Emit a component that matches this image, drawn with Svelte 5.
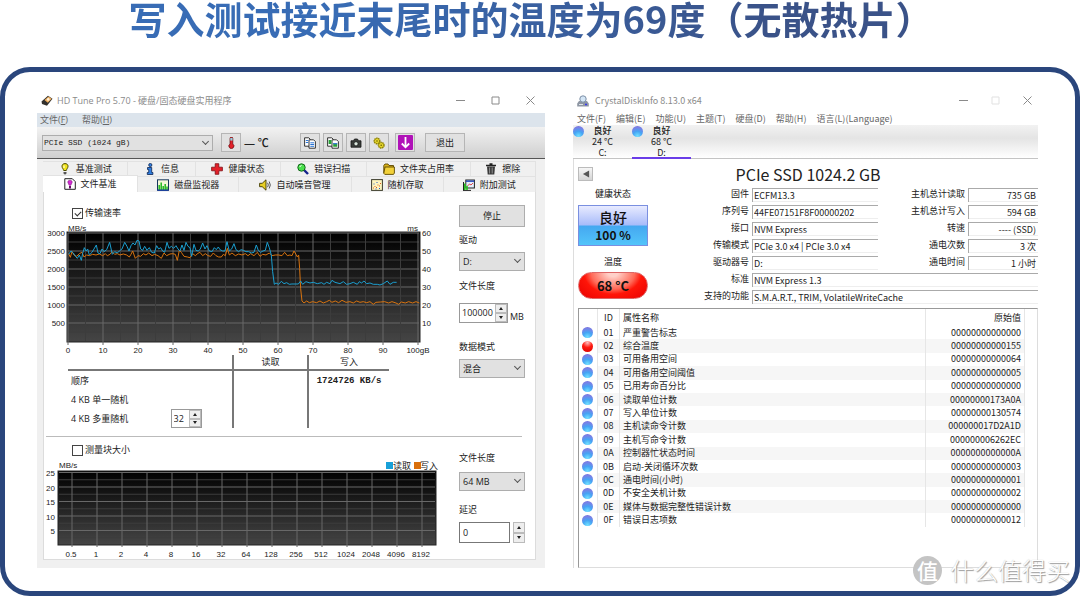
<script>
  const topTabs = [
    { icon: 'bulb', label: '基准测试', grow: 85 },
    { icon: 'info', label: '信息', grow: 67 },
    { icon: 'cross', label: '健康状态', grow: 85 },
    { icon: 'search', label: '错误扫描', grow: 86 },
    { icon: 'folder', label: '文件夹占用率', grow: 103 },
    { icon: 'trash', label: '擦除', grow: 65 }
  ];
  const bottomTabs = [
    { icon: 'filebench', label: '文件基准', grow: 95, selected: true },
    { icon: 'monitor', label: '磁盘监视器', grow: 101 },
    { icon: 'speaker', label: '自动噪音管理', grow: 112 },
    { icon: 'random', label: '随机存取', grow: 92 },
    { icon: 'extra', label: '附加测试', grow: 92 }
  ];

  const tens = [0, 10, 20, 30, 40, 50, 60, 70, 80, 90, 100];
  const blocks = ['0.5', 1, 2, 4, 8, 16, 32, 64, 128, 256, 512, 1024, 2048, 4096, 8192];

  // traces are stored at 3x the chart scale
  const readTrace =
    '98,88 105,78 112,84 118,94 124,100 130,90 136,106 140,85 145,68 150,78 155,72 160,90 168,82 174,72 181,60 186,84 192,86 198,72 204,80 212,74 221,52 229,88 236,80 244,84 250,78 258,72 266,52 273,64 279,78 285,62 291,54 297,60 303,46 309,48 314,72 320,76 326,64 333,76 340,68 347,82 355,84 362,62 368,72 374,68 380,78 386,82 393,52 399,70 406,64 413,70 420,62 426,72 432,78 438,60 444,76 450,52 456,64 462,68 467,94 474,58 480,76 487,78 493,72 500,54 507,72 513,62 520,78 528,80 535,68 541,74 547,66 552,74 560,78 567,78 573,50 580,78 587,72 594,56 600,74 608,80 615,74 622,76 630,80 638,80 646,84 654,82 661,60 667,76 674,82 681,78 688,76 694,52 700,68 706,90 710,140 715,178 720,174 728,178 736,169 744,176 752,173 760,178 768,177 787,177 794,168 800,178 810,170 822,174 832,172 844,176 857,173 864,178 872,172 882,176 888,166 897,172 912,176 922,170 932,178 942,176 952,172 964,178 970,170 977,174 984,168 992,176 1002,174 1012,178 1024,178 1032,180 1042,176 1054,168 1062,178 1072,172 1082,172';
  const writeTrace =
    '98,86 103,97 108,80 114,90 122,94 130,86 138,82 144,96 152,90 160,92 170,88 180,90 190,87 200,92 208,86 214,92 222,88 228,80 236,88 244,86 252,90 262,87 272,90 280,96 285,88 290,78 298,100 306,92 314,94 322,86 330,90 338,84 348,92 356,88 366,92 376,100 384,84 392,92 402,87 410,86 418,88 424,106 430,76 436,82 444,94 454,96 462,98 470,86 478,92 486,85 492,82 500,92 508,86 516,92 524,94 532,84 540,92 548,96 556,96 562,88 568,92 574,70 580,90 588,84 598,92 608,87 618,90 628,86 636,92 644,86 654,92 664,82 672,94 680,88 690,90 700,84 708,92 718,90 728,90 738,92 746,82 754,92 762,90 768,92 774,78 780,88 784,96 788,90 791,130 794,190 798,228 804,234 812,228 820,233 830,230 842,233 852,228 862,234 872,230 880,226 888,232 898,228 908,233 918,226 930,232 942,230 952,234 962,228 972,232 982,230 992,233 1002,230 1012,238 1020,232 1034,231 1046,230 1058,234 1068,230 1080,234 1088,238 1096,231 1108,234 1118,230 1130,234 1140,230 1150,234';

  const menus = ['文件(F)', '编辑(E)', '功能(U)', '主题(T)', '硬盘(D)', '帮助(H)', '语言(L)(Language)'];
  const disks = [
    { temp: '24 °C', letter: 'C:' },
    { temp: '68 °C', letter: 'D:', selected: true }
  ];

  const specs = [
    { id: 'fw', label: '固件', value: 'ECFM13.3', rid: 'reads', rlabel: '主机总计读取', rvalue: '735 GB' },
    { id: 'sn', label: '序列号', value: '44FE07151F8F00000202', rid: 'writes', rlabel: '主机总计写入', rvalue: '594 GB' },
    { id: 'if', label: '接口', value: 'NVM Express', rid: 'rpm', rlabel: '转速', rvalue: '---- (SSD)' },
    { id: 'mode', label: '传输模式', value: 'PCIe 3.0 x4 | PCIe 3.0 x4', rid: 'count', rlabel: '通电次数', rvalue: '3 次' },
    { id: 'drv', label: '驱动器号', value: 'D:', rid: 'hours', rlabel: '通电时间', rvalue: '1 小时' },
    { id: 'std', label: '标准', value: 'NVM Express 1.3' },
    { id: 'feat', label: '支持的功能', value: 'S.M.A.R.T., TRIM, VolatileWriteCache' }
  ];

  const attributes = [
    ['01', '严重警告标志', '00000000000000'],
    ['02', '综合温度', '00000000000155'],
    ['03', '可用备用空间', '00000000000064'],
    ['04', '可用备用空间阈值', '00000000000005'],
    ['05', '已用寿命百分比', '00000000000000'],
    ['06', '读取单位计数', '00000000173A0A'],
    ['07', '写入单位计数', '00000000130574'],
    ['08', '主机读命令计数', '000000017D2A1D'],
    ['09', '主机写命令计数', '000000006262EC'],
    ['0A', '控制器忙状态时间', '0000000000000A'],
    ['0B', '启动-关闭循环次数', '00000000000003'],
    ['0C', '通电时间(小时)', '00000000000001'],
    ['0D', '不安全关机计数', '00000000000002'],
    ['0E', '媒体与数据完整性错误计数', '00000000000000'],
    ['0F', '错误日志项数', '00000000000012']
  ];

  let transfer = $state(true);
  let blockSize = $state(false);
  let queue = $state(32);
  let fileLength = $state(100000);
  let delay = $state(0);
</script>

{#snippet icon(name)}
  <svg class="icon" viewBox="0 0 12 12" aria-hidden="true">
    {#if name === 'bulb'}
      <path d="M6 .6c2 0 3 1.200 3 2.700 0 1.700-1.400 2.600-1.700 4.200H4.700C4.400 5.900 3 5 3 3.300 3 1.800 4 .6 6 .6z" fill="#f2e51c" stroke="#4c4a00" />
      <path d="M5 2.500v2.500" stroke="#fff" />
      <path d="M4.500 9h3v1.500L6 11.700l-1.500-1.200z" fill="#555" />
    {:else if name === 'info'}
      <circle cx="6.300" cy="2" r="1.600" fill="#2f7ee0" stroke="#0b2350" stroke-width=".8" />
      <path d="M3.500 4.500h4.200v5h1.200v2H3.300v-2h1.400v-3H3.500z" fill="#2f7ee0" stroke="#0b2350" stroke-width=".8" />
    {:else if name === 'cross'}
      <path d="M4.200.7h3.600v3.500h3.600v3.600H7.800v3.500H4.200V7.800H.6V4.200h3.600z" fill="#e3202a" stroke="#7c0d12" stroke-width=".8" />
    {:else if name === 'search'}
      <path d="M7 7l4 4" stroke="#14228c" stroke-width="2.400" />
      <circle cx="4.500" cy="4.500" r="3.700" fill="#49e04c" stroke="#12671a" />
      <path d="M2.800 4a2 2 0 0 1 1.700-1.500" stroke="#fff" fill="none" />
    {:else if name === 'folder'}
      <path d="M.8 10V2.500L2 1h3l1 1.500h4.500V4" fill="#d9b21a" stroke="#5c4700" stroke-width=".9" />
      <path d="M2 4h9.400v6L10.500 11.400H1.800L.8 10.300z" fill="#f2d13a" stroke="#5c4700" stroke-width=".9" />
    {:else if name === 'trash'}
      <path d="M1 2.500h10M4.500 1h3" stroke="#222" stroke-width="1.500" />
      <path d="M2 3.500h8L9.300 11.500H2.700z" fill="#3a3a3a" />
      <path d="M4.600 4.500v6M7.200 4.500v6" stroke="#aaa" stroke-width=".8" />
    {:else if name === 'filebench'}
      <path d="M.8.700h7.500l3 3v7.600H.8z" fill="#fff" stroke="#222" />
      <path d="M6 2.200c1.500 0 2.200.9 2.200 2S7 6 6.900 7.300H5.100C5 6 3.800 5.300 3.800 4.200s.7-2 2.200-2z" fill="#d429d4" stroke="#6b0b6b" stroke-width=".5" />
      <path d="M6 8v2.500" stroke="#6b0b6b" stroke-width="2" />
    {:else if name === 'monitor'}
      <rect x=".5" y=".8" width="11" height="10.500" fill="#f4f8d8" stroke="#16365e" />
      <path d="M2.200 11V6M4.200 11V3.500M6.200 11V7M8.200 11V5M10 11V7.500" stroke="#22b81f" stroke-width="1.500" />
      <path d="M.5 11.200h11" stroke="#1a3fa0" stroke-width="1.400" />
    {:else if name === 'speaker'}
      <path d="M.6 4.300h2.600L7 .8v10.400L3.200 7.700H.6z" fill="#e8cf24" stroke="#403900" stroke-width=".9" />
      <path d="M8.600 3.800q1.400 2.200 0 4.400M10.200 2.500q2.200 3.500 0 7" fill="none" stroke="#444" stroke-width=".9" />
    {:else if name === 'random'}
      <rect x=".6" y=".6" width="10.800" height="10.800" fill="#fdf6c0" stroke="#3c3c2c" />
      <path d="M2 9h1M3.500 7.500h1M5 8.500h1M6.500 6h1M8 7h1M9 4.500h1" stroke="#e06020" />
      <path d="M2.500 5h1M5.500 3.500h1M8 9.500h1M4.500 10h1" stroke="#2a57c4" />
    {:else if name === 'extra'}
      <rect x="2.800" y="1" width="8.600" height="8" fill="#e4eefc" stroke="#222" />
      <path d="M3 2.200h8.200" stroke="#2748c0" stroke-width="1.400" />
      <path d="M4.500 7l2-2 1.500 1 2-2" fill="none" stroke="#d33" stroke-width=".9" />
      <path d="M.5 11.400V3M0 11.400h8" stroke="#222" />
      <path d="M1.800 11V4.500M4 11V7" stroke="#26c422" stroke-width="1.600" />
    {:else if name === 'thermo'}
      <path d="M5 1.500a1.400 1.400 0 0 1 2.800 0V7A2.500 2.500 0 1 1 5 7z" fill="#e3202a" stroke="#5b0d10" stroke-width=".7" />
      <path d="M5.300 1h2.200v2.600H5.300z" fill="#8fd4e6" />
    {:else if name === 'copy' || name === 'copyimg'}
      <path d="M.6.800h4.200L6.500 2.500v6.700H.6z" fill="#fff" stroke="#222" stroke-width=".9" />
      <path d="M5 2.800h4.600l1.800 1.800v6.600H5z" fill="#fff" stroke="#222" stroke-width=".9" />
      {#if name === 'copy'}
        <path d="M1.800 3.500h2.500M1.800 5.500h2.500M6.300 5.800h3.800M6.300 7.500h3.800M6.300 9.300h3.800" stroke="#2a74d4" />
      {:else}
        <path d="M1.600 3h2.800v4H1.600zM6.200 6h4v3.800h-4z" fill="#27a435" />
        <path d="M6.200 6h4v1.300h-4z" fill="#3a7bd5" />
      {/if}
    {:else if name === 'camera'}
      <path d="M1 3.800h2.500L4.500 2h3l1 1.800H11v6.400H1z" fill="#3b3f3b" stroke="#151515" stroke-width=".8" />
      <circle cx="6" cy="6.800" r="2.100" fill="#d9e6dc" stroke="#111" stroke-width=".7" />
    {:else if name === 'gears'}
      <circle cx="4" cy="4" r="2.800" fill="#e4d52b" stroke="#8d8000" stroke-dasharray="1.500 .5" stroke-width="1.400" />
      <circle cx="8.200" cy="8.200" r="2.800" fill="#e4d52b" stroke="#8d8000" stroke-dasharray="1.500 .5" stroke-width="1.400" />
      <circle cx="4" cy="4" r=".8" fill="#6d6300" />
      <circle cx="8.200" cy="8.200" r=".8" fill="#6d6300" />
    {/if}
  </svg>
{/snippet}

{#snippet spin(label, step)}
  <span class="spin">
    <button class="up" aria-label="{label} +" onclick={() => step(1)}></button>
    <button class="down" aria-label="{label} −" onclick={() => step(-1)}></button>
  </span>
{/snippet}

{#snippet controls(disabled)}
  <span class="controls" class:narrow={disabled}>
    <button aria-label="最小化"><svg viewBox="0 0 9 9"><path d="M0 4.500h9" /></svg></button>
    <button aria-label="最大化" {disabled}><svg viewBox="0 0 9 9"><path d="M1 1h7v7H1z" /></svg></button>
    <button aria-label="关闭"><svg viewBox="0 0 9 9"><path d="M.5.500l8 8M8.500.500l-8 8" /></svg></button>
  </span>
{/snippet}

<main>
  <h1><span>写入测试接近末尾时的温度为69度（无散热片）</span></h1>

  <div class="frame">
    <section class="window tune">
      <header class="titlebar">
        <svg class="icon" viewBox="0 0 12 12" aria-hidden="true">
          <path d="M.5 6.500L7 .8l4.500 3L6 10.800 1 9z" fill="#33302c" />
          <path d="M3.500 5L7.500 1.500l3.200 2.300-3.900 4z" fill="#f0b060" />
          <circle cx="7.200" cy="4.400" r="1.300" fill="#fff0d8" />
        </svg>
        <span>HD Tune Pro 5.70 - 硬盘/固态硬盘实用程序</span>
        {@render controls(false)}
      </header>
      <nav class="menu">
        <button>文件(<u>F</u>)</button>
        <button>帮助(<u>H</u>)</button>
      </nav>

      <div class="toolbar">
        <span class="combo drive">
          <select aria-label="硬盘"><option>PCIe SSD (1024 gB)</option></select>
        </span>
        <button class="tool" aria-label="温度">{@render icon('thermo')}</button>
        <span class="degrees">— ℃</span>
        <div class="tools">
          <button class="tool" aria-label="复制文本">{@render icon('copy')}</button>
          <button class="tool" aria-label="复制图像">{@render icon('copyimg')}</button>
          <button class="tool" aria-label="截图">{@render icon('camera')}</button>
          <button class="tool" aria-label="选项">{@render icon('gears')}</button>
        </div>
        <button class="tool" aria-label="保存">
          <svg class="save" viewBox="0 0 15 15" aria-hidden="true">
            <rect width="15" height="15" rx="1" fill="#b012b8" />
            <path d="M7.500 2v10M3.800 8.500l3.700 3.800 3.700-3.800" fill="none" stroke="#fff" stroke-width="1.800" />
          </svg>
        </button>
        <button class="tool exit">退出</button>
      </div>

      <div class="tabs" role="tablist">
        <div class="tab-row">
          {#each topTabs as tab}
            <button role="tab" aria-selected="false" style:flex-grow={tab.grow}>
              {@render icon(tab.icon)}{tab.label}
            </button>
          {/each}
        </div>
        <div class="tab-row second">
          {#each bottomTabs as tab}
            <button role="tab" class:selected={tab.selected} aria-selected={!!tab.selected} style:flex-grow={tab.grow}>
              {@render icon(tab.icon)}{tab.label}
            </button>
          {/each}
        </div>
      </div>

      <div class="panel">
        <div class="bench">
          <div class="plot-col">
            <label class="check rate"><input type="checkbox" bind:checked={transfer} />传输速率</label>
            <svg class="chart" viewBox="0 0 396 133" role="img" aria-label="传输速率">
              <defs>
                <linearGradient id="dark" x1="0" y1="0" x2="0" y2="1">
                  <stop offset="0" stop-color="#000" />
                  <stop offset="1" stop-color="#454545" />
                </linearGradient>
              </defs>
              <rect x="23" y="10" width="353" height="110" fill="url(#dark)" stroke="#222" />
              {#each Array(12) as _, i}
                <path class={i % 2 ? 'minor' : 'major'} d="M24 {11 + i * 9}h351" />
              {/each}
              {#each Array(21) as _, i}
                <path class={i % 2 ? 'minor' : 'major'} d="M{24 + i * 17.5} 11v{i % 2 ? 108 : 112}" />
              {/each}
              <g transform="translate(-8 3) scale(.3333)" fill="none" stroke-width="3">
                <polyline points={writeTrace} stroke="#d9730f" />
                <polyline points={readTrace} stroke="#1b9fd0" />
              </g>
              <text x="24" y="9">MB/s</text>
              <text x="374" y="9" text-anchor="end">ms</text>
              {#each [3000, 2500, 2000, 1500, 1000, 500] as v, i}
                <text x="21" y={14 + i * 18} text-anchor="end">{v}</text>
                <text x="378" y={14 + i * 18}>{60 - i * 10}</text>
              {/each}
              {#each tens as v, i}
                <text x={24 + i * 35} y="131" text-anchor="middle">{v === 100 ? '100gB' : v}</text>
              {/each}
            </svg>

            <table class="results">
              <thead>
                <tr><th class="mode"></th><th class="read">读取</th><th>写入</th></tr>
              </thead>
              <tbody>
                <tr><td>顺序</td><td></td><td class="speed">1724726 KB/s</td></tr>
                <tr><td>4 KB 单一随机</td><td></td><td></td></tr>
                <tr>
                  <td>
                    <div class="queue">
                      <label for="queue">4 KB 多重随机</label>
                      <span class="number short">
                        <input id="queue" type="text" bind:value={queue} />
                        {@render spin('队列', (n) => (queue += n))}
                      </span>
                    </div>
                  </td>
                  <td></td><td></td>
                </tr>
              </tbody>
            </table>
          </div>

          <div class="side">
            <button class="stop">停止</button>
            <label for="drive">驱动</label>
            <span class="combo"><select id="drive"><option>D:</option></select></span>
            <label class="wide-gap" for="length">文件长度</label>
            <div class="with-unit">
              <span class="number">
                <input id="length" type="text" bind:value={fileLength} />
                {@render spin('文件长度', (n) => (fileLength += n))}
              </span>
              MB
            </div>
            <label class="pattern" for="pattern">数据模式</label>
            <span class="combo"><select id="pattern"><option>混合</option></select></span>
          </div>
        </div>

        <hr />

        <div class="bench">
          <div class="plot-col">
            <label class="check block"><input type="checkbox" bind:checked={blockSize} />测量块大小</label>
            <svg class="chart" viewBox="0 0 396 101" role="img" aria-label="块大小">
              <rect x="14" y="13" width="378" height="74" fill="url(#dark)" stroke="#222" />
              {#each Array(10) as _, i}
                <path class={i % 2 ? 'minor' : 'major'} d="M15 {14.500 + i * 7.25}h376" />
              {/each}
              {#each blocks as v, i}
                <path class="major" d="M{28 + i * 25} 14v75" />
                <text x={27 + i * 25} y="99" text-anchor="middle">{v}</text>
              {/each}
              {#each [25, 20, 15, 10, 5] as v, i}
                <text x="11" y={18 + i * 14.5} text-anchor="end">{v}</text>
              {/each}
              <text x="15" y="10">MB/s</text>
              <rect x="342" y="4" width="7" height="7" fill="#18a0d8" />
              <text class="cjk" x="349" y="11">读取</text>
              <rect x="370" y="4" width="7" height="7" fill="#d9700c" />
              <text class="cjk" x="376" y="11">写入</text>
            </svg>
          </div>

          <div class="side lower">
            <label for="block-length">文件长度</label>
            <span class="combo"><select id="block-length"><option>64 MB</option></select></span>
            <label class="delay" for="delay">延迟</label>
            <span class="split">
              <input id="delay" type="text" bind:value={delay} />
              {@render spin('延迟', (n) => (delay += n))}
            </span>
          </div>
        </div>
      </div>
    </section>

    <section class="window crystal">
      <header class="titlebar">
        <svg class="icon" viewBox="0 0 12 12" aria-hidden="true">
          <path d="M2 6h8l1.800 2.500v3H.2v-3z" fill="#8e96a3" />
          <circle cx="6" cy="4" r="3.200" fill="#d4e6f6" stroke="#7d8fa6" />
          <path d="M2 9.500h4" stroke="#dfe4ea" />
          <path d="M8 9.500h2" stroke="#3a3af0" stroke-width="1.600" />
        </svg>
        <span>CrystalDiskInfo 8.13.0 x64</span>
        {@render controls(true)}
      </header>
      <nav class="menu">
        {#each menus as item}<button>{item}</button>{/each}
      </nav>
      <div class="disks">
        {#each disks as disk}
          <button class:selected={disk.selected}>
            <i class="orb"></i>
            <b>良好</b><span>{disk.temp}</span><span>{disk.letter}</span>
          </button>
        {/each}
      </div>

      <div class="body">
        <div class="model">
          <button aria-label="上一个"><svg viewBox="0 0 9 9"><path d="M8 .5v8L1 4.500z" fill="#555" /></svg></button>
          <h2>PCIe SSD 1024.2 GB</h2>
        </div>

        <div class="info">
          <div class="health">
            <span>健康状态</span>
            <button class="good"><b>良好</b><b>100 %</b></button>
            <span class="temp-label">温度</span>
            <button class="hot">68 °C</button>
          </div>
          <div class="specs">
            {#each specs as s}
              <label for={s.id}>{s.label}</label>
              <input id={s.id} class:full={!s.rid} readonly value={s.value} />
              {#if s.rid}
                <label for={s.rid}>{s.rlabel}</label>
                <input id={s.rid} class="right" readonly value={s.rvalue} />
              {/if}
            {/each}
          </div>
        </div>

        <div class="list">
          <table>
            <thead>
              <tr><th class="dot"></th><th class="id">ID</th><th class="name">属性名称</th><th class="raw">原始值</th></tr>
            </thead>
            <tbody>
              {#each attributes as [id, name, raw]}
                <tr>
                  <td class="dot"><i class="orb" class:red={id === '02'}></i></td>
                  <td class="id">{id}</td>
                  <td class="name">{name}</td>
                  <td class="raw">{raw}</td>
                </tr>
              {/each}
            </tbody>
          </table>
        </div>
      </div>
    </section>

    <div class="watermark"><span class="badge">值</span>什么值得买</div>
  </div>
</main>

<style>
  :global(body) {
    background: #fff;
  }
  main {
    font: 9px/12px 'Noto Sans CJK SC', 'Noto Sans', sans-serif;
    color: #222;
  }
  button, input, select {
    font: inherit;
    color: inherit;
    box-sizing: border-box;
    margin: 0;
    padding: 0;
    border: none;
    border-radius: 0;
    background: none;
    min-width: 0;
  }
  h1 {
    margin: 0;
    padding-bottom: 31px;
    font-size: 38px;
    line-height: 36px;
    font-weight: 700;
    text-align: center;
    white-space: nowrap;
  }
  h1 span {
    margin-right: 18px;
    background: linear-gradient(90deg, #386cb5 25%, #3a5288 80%);
    background-clip: text;
    color: transparent;
  }
  .frame {
    position: relative;
    display: flex;
    gap: 28px;
    padding: 16px 37px 23px 32px;
    border: 5px solid #2a467c;
    border-radius: 30px;
  }
  .window { display: flex; flex-direction: column; min-width: 0; }
  .tune { flex: 508 1 0; background: #f0f0f0; font-family: 'Open Sans', 'Noto Sans CJK SC', sans-serif; }
  .crystal { flex: 465 1 0; }
  .icon { width: 12px; height: 12px; flex-shrink: 0; }

  .titlebar {
    display: flex;
    align-items: center;
    gap: 4px;
    height: 25px;
    padding-left: 4px;
    background: #fff;
    color: #8a8a8a;
  }
  .crystal .titlebar { gap: 6px; }
  .controls { display: flex; gap: 26px; margin-left: auto; padding-right: 10px; }
  .controls.narrow { gap: 23px; padding-right: 6px; }
  .controls button { display: flex; }
  .controls svg { width: 9px; height: 9px; fill: none; stroke: #8a8a8a; }
  .controls button:disabled { opacity: 0.25; }

  .menu { display: flex; color: #666; }
  .tune .menu { height: 14px; padding-left: 3px; gap: 14px; background: #dce4ec; }
  .crystal .menu { height: 12px; padding-left: 4px; gap: 10px; }

  .toolbar {
    display: flex;
    align-items: center;
    height: 31px;
    padding: 0 5px;
    background: linear-gradient(#f2f2f2, #cfcfcf);
    border-bottom: 1px solid #555;
  }
  .combo { position: relative; display: flex; height: 19px; }
  .combo select {
    appearance: none;
    width: 100%;
    padding: 0 14px 0 3px;
    background: #e1e1e1;
    border: 1px solid #adadad;
  }
  .combo::after {
    content: '';
    position: absolute;
    right: 5px;
    top: 5px;
    width: 4px;
    height: 4px;
    border: solid #555;
    border-width: 0 1px 1px 0;
    transform: rotate(45deg);
    pointer-events: none;
  }
  .drive { width: 171px; height: 16px; margin-right: 8px; }
  .drive select { padding-left: 1px; font: 8px/12px 'Liberation Mono', monospace; }
  .drive::after { top: 4px; }
  .tool {
    display: flex;
    align-items: center;
    justify-content: center;
    width: 20px;
    height: 19px;
    background: #e1e1e1;
    border: 1px solid #b5b5b5;
  }
  .degrees { margin-left: 3px; font-size: 11px; font-weight: 500; }
  .tools { display: flex; gap: 3px; margin: 0 6px 0 auto; }
  .save { width: 15px; height: 15px; }
  .exit { width: 40px; margin: 0 75px 0 10px; }

  .tabs { padding: 2px 9px 0 6px; }
  .tab-row { display: flex; height: 15px; }
  .tab-row.second { height: 16px; }
  .tab-row button {
    display: flex;
    flex-basis: 0;
    align-items: center;
    justify-content: center;
    gap: 5px;
    white-space: nowrap;
    border: solid #e2e2e2;
    border-width: 1px 1px 0 0;
  }
  .tab-row .selected { background: #fff; margin-top: -1px; }

  .panel {
    flex: 1;
    margin: 0 9px 8px 6px;
    background: #fff;
    border: solid #dcdcdc;
    border-width: 0 1px 1px;
  }
  .bench { display: flex; gap: 19px; padding-right: 10px; }
  .plot-col { flex: 1; min-width: 0; }
  .check { display: flex; align-items: center; gap: 2px; height: 12px; padding-left: 28px; }
  .check.rate { margin: 15px 0 3px; }
  .check.block { margin: 7px 0 2px; }
  .check input {
    appearance: none;
    display: grid;
    width: 11px;
    height: 11px;
    background: #fff;
    border: 1px solid #444;
  }
  .check input:checked::after {
    content: '';
    width: 3px;
    height: 5px;
    place-self: center;
    border: solid #333;
    border-width: 0 1px 1px 0;
    transform: rotate(45deg);
  }
  .chart { display: block; width: 100%; }
  .chart text { font: 8px 'Liberation Sans', sans-serif; fill: #222; }
  .chart .cjk { font: 9px 'Noto Sans CJK SC', sans-serif; }
  .major { stroke: #686868; }
  .minor { stroke: #3c3c3c; }

  .results {
    width: 81%;
    margin-left: 24px;
    table-layout: fixed;
    border-collapse: collapse;
  }
  .results th { height: 14px; padding: 0; font-weight: 400; border-bottom: 2px solid #777; }
  .results .mode { width: 51%; }
  .results .read { width: 23%; }
  .results td { height: 19px; padding: 0; }
  .results td:first-child { padding-left: 3px; }
  .results th + th, .results td + td { border-left: 2px solid #777; text-align: center; }
  .results .speed { font: bold 9px/12px 'Liberation Mono', monospace; }
  .queue { display: flex; align-items: center; justify-content: space-between; padding-right: 30px; }

  .number { display: flex; width: 49px; height: 20px; border: 1px solid #999; box-sizing: border-box; }
  .number input { flex: 1; width: 0; padding-left: 2px; }
  .number.short { width: 31px; height: 19px; }
  .spin { display: flex; flex-direction: column; width: 12px; }
  .spin button {
    flex: 1;
    display: grid;
    place-items: center;
    background: #eee;
    border: 1px solid #bbb;
  }
  .spin button::after { content: ''; border: 2px solid transparent; }
  .spin .up::after { border-top: none; border-bottom: 3px solid #222; }
  .spin .down::after { border-bottom: none; border-top: 3px solid #222; }

  .side { display: flex; flex-direction: column; width: 66px; padding-top: 13px; }
  .stop { height: 22px; margin-bottom: 7px; background: #e1e1e1; border: 1px solid #adadad; }
  .side label { margin-bottom: 6px; }
  .side .wide-gap { margin: 9px 0 11px; }
  .side .pattern { margin-top: 18px; }
  .with-unit { display: flex; align-items: flex-end; gap: 2px; white-space: nowrap; }
  .side.lower { padding-top: 15px; }
  .side.lower label { margin-bottom: 8px; }
  .side.lower .delay { margin-top: 13px; margin-bottom: 6px; }
  .split { display: flex; gap: 3px; height: 21px; }
  .split input { flex: 1; width: 0; padding-left: 3px; border: 1px solid #777; }
  hr { margin: 8px 13px 0 2px; border: none; border-top: 1px solid #bbb; }

  .orb {
    display: block;
    width: 11px;
    height: 11px;
    border-radius: 50%;
    background: radial-gradient(circle at 50% 90%, #6fe0ff, #45a4f4 40%, #7a80e6 75%, #6a66d0);
  }
  .orb.red { background: radial-gradient(circle at 50% 15%, #ffc0c0, #ff1a10 45%, #d80000); }

  .disks {
    display: flex;
    height: 34px;
    box-sizing: border-box;
    background: linear-gradient(#f2f2f2, #e4e4e4 40%, #fff);
    border-bottom: 1px solid #c4c4c4;
  }
  .disks button {
    position: relative;
    display: flex;
    flex-direction: column;
    width: 59px;
    height: 34px;
    line-height: 11px;
    align-items: center;
  }
  .disks b { font-weight: 500; }
  .disks .orb { position: absolute; left: 0; top: 1px; }
  .disks .selected { border-bottom: 2px solid #6a3de8; }

  .body {
    flex: 1;
    display: flex;
    flex-direction: column;
    padding-left: 4px;
    border-left: 1px solid #ddd;
  }
  .model { display: grid; grid-template-columns: 15px 1fr 15px; align-items: center; height: 29px; }
  .model button {
    display: grid;
    place-items: center;
    height: 14px;
    background: linear-gradient(#f6f6f6, #d4d4d4);
    border: 1px solid #bbb;
  }
  .model svg { width: 8px; height: 8px; }
  h2 { margin: 0; font-size: 16px; line-height: 24px; font-weight: 400; text-align: center; }
  .info { display: flex; }
  .health { display: flex; flex-direction: column; width: 70px; text-align: center; color: #111; }
  .good {
    display: flex;
    flex-direction: column;
    justify-content: center;
    height: 41px;
    margin-top: 5px;
    font-size: 12px;
    line-height: 18px;
    background: linear-gradient(#e8ebff, #a9bcfa 48%, #45a8f0 52%, #52c4fa);
    border: 1px solid #7a8fe0;
  }
  .good b:first-child { font-size: 14px; font-weight: 500; }
  .temp-label { margin: 10px 0 4px; }
  .hot {
    height: 27px;
    font-size: 13px;
    font-weight: 700;
    border-radius: 14px;
    background: radial-gradient(ellipse at 50% 0, #ffd0c8 10%, #ff6a58 45%, #ff1508 60%, #e80000);
    border: 1px solid #d66;
  }
  .specs {
    flex: 1;
    display: grid;
    grid-template-columns: 104fr 126fr 90fr 70fr;
    grid-auto-rows: 14px;
    row-gap: 3px;
  }
  .specs label { padding-right: 3px; text-align: right; white-space: nowrap; }
  .specs input {
    width: 100%;
    padding: 0 2px 0 1px;
    border: solid #aaa;
    border-width: 1px 0 0 1px;
    box-shadow: inset 0 -1px #eee;
  }
  .specs .full { grid-column: 2 / -1; }
  .specs .right { text-align: right; }

  .list {
    flex: 1;
    margin-top: 4px;
    padding-right: 12px;
    border: 1px solid #ddd;
    border-color: #999 #ddd #ddd #999;
  }
  .list table { width: 100%; height: 218px; border-collapse: collapse; table-layout: fixed; }
  .list th { height: 17px; font-weight: 400; }
  .list th, .list td { padding: 0; border-right: 1px solid #e6e6e6; }
  .list .dot { width: 18px; }
  .list .dot .orb { margin: 0 auto 0 3px; }
  .list .id { width: 21px; text-align: center; }
  .list .name { padding-left: 3px; text-align: left; }
  .list .raw { width: 95px; padding-right: 3px; text-align: right; }
  .list tbody tr:nth-child(even) td:not(.dot) { background: #f6f6f6; }

  .watermark {
    position: absolute;
    right: 5px;
    bottom: 6px;
    display: flex;
    align-items: center;
    gap: 8px;
    font-size: 24px;
    line-height: 30px;
    font-weight: 300;
    color: #fff;
    text-shadow: 1px 1px 1px #999, 0 0 1px #bbb;
  }
  .badge {
    width: 29px;
    height: 29px;
    border-radius: 50%;
    background: #c4c4c4;
    font-size: 21px;
    line-height: 28px;
    font-weight: 500;
    text-align: center;
    text-shadow: none;
  }
</style>
